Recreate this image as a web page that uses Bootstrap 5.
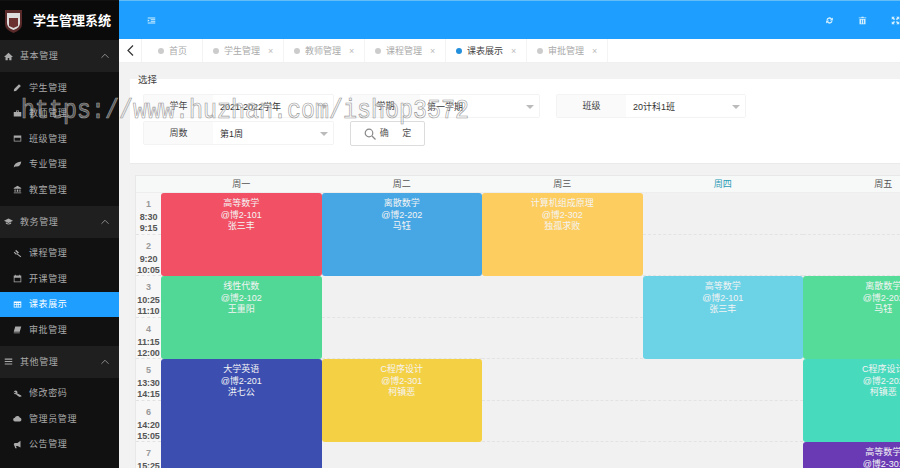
<!DOCTYPE html>
<html lang="zh"><head><meta charset="utf-8"><title>学生管理系统</title>
<link href="https://cdn.jsdelivr.net/npm/bootstrap@5.3.0/dist/css/bootstrap.min.css" rel="stylesheet">
<style>
html,body{height:100%;overflow:hidden}
body{width:900px;height:468px;background:#f2f2f2;font:9px/12px "Liberation Sans","Noto Sans CJK SC",sans-serif;color:#444;position:relative}
.shell{height:468px}
.side{width:119px;flex:none;background:#111;color:#aaa;padding-top:1px}
.brand{height:39px;background:#0a0a0a;color:#fff;font-size:13px;font-weight:700;padding-left:5px;gap:11px}
.sgroup{height:32px;background:#1f1f1f;padding:0 10px 0 4px;letter-spacing:.6px;margin-bottom:0}
.sgroup svg.ic{margin-right:7px}
.sitem{height:25.5px;padding-left:13px;gap:7px;letter-spacing:.6px}
.sitem.on{background:#1e9fff;color:#fff}
.slist{padding:3px 0}
.ic{width:9px;height:9px;fill:currentColor;flex:none}
.chev{width:8px;height:6px;fill:none;stroke:#999;stroke-width:1;margin-left:auto}
.mainc{flex:1;min-width:0;overflow:hidden}
.topb{height:39px;background:#1e9fff;border-top:1px solid #65bdf7;color:#d3efff;padding:0 0 0 28px}
.topb .ric{gap:0;margin:0 -12px 0 auto}
.topb .ric span{width:33px;text-align:center}
.tabsb{height:24px;background:#fff;color:#aaa;border-bottom:1px solid #f0f0f0}
.tbk{width:23px;border-right:1px solid #f2f2f2;color:#333;justify-content:center}
.tabi{width:81px;border-right:1px solid #f4f4f4;padding-left:10px;gap:5px;white-space:nowrap}
.tabi.first{width:61px;padding-left:16px}
.tabi.on{color:#444}
.dot{width:6px;height:6px;border-radius:50%;background:#ccc;flex:none}
.tabi.on .dot{background:#2490dd}
.xx{font-size:9px;color:#bbb;margin-left:3px}
.pane{padding:16px 0 0 11px;width:781px}
.fcard{background:#fff;height:85px;position:relative;padding:15px 0 0 13px;border-bottom:1px solid #eaeaea}
.legendx{position:absolute;left:8px;top:-5px;color:#444;line-height:12px;font-size:9.5px}
.frow{gap:16px;margin-bottom:3px}
.input-group.fgrp{width:191px;flex-wrap:nowrap;height:24px;border:1px solid #f3f3f3;border-radius:2px}
.fgrp.g2{width:190px}
.input-group-text.flab{width:70px;justify-content:center;background:#fafafa;border:0;border-right:1px solid #f0f0f0;border-radius:0;font-size:9px;color:#444;padding:1px 0 0}
.fsel{flex:1;padding:1px 0 0 7px;color:#333;background:#fff;position:relative;display:flex;align-items:center}
.fsel:after{content:"";position:absolute;right:5px;top:10px;border:4.500px solid transparent;border-top-color:#bbb;border-bottom:0}
.btnok.btn{width:75px;height:25px;padding:0;border:1px solid #dcdcdc;border-radius:2px;color:#555;font-size:9px;background:#fff;display:flex;align-items:center;justify-content:center;gap:4px;margin-top:0}
.btnok svg{width:12px;height:12px;fill:none;stroke:#888;stroke-width:1.2}
.tgrid{display:grid;grid-template-columns:25px repeat(5,160.5px);grid-template-rows:17px repeat(8,41.5px);margin:11px 0 0 5px;border-top:1px solid #e8e8e8;border-left:1px solid #e8e8e8;width:900px;height:400px;overflow:hidden;background:#f1f1f1}
.thd{background:#f7f8f8;display:flex;align-items:center;justify-content:center;color:#555;border-bottom:1px solid #eee}
.thd.today{color:#2a9bb5}
.tme{background:#f7f7f7;border-bottom:1px dashed #e2e2e2;text-align:center;font-size:9px;line-height:11px;font-weight:700;color:#555;padding-top:6px;letter-spacing:-.1px}
.tme b{display:block;color:#999;height:13px}
.emp{border-bottom:1px dashed #e3e3e3}
.cls{color:#f4f4f4;text-align:center;border-radius:3px;padding-top:5px;line-height:11.5px;z-index:1}
.mark1{position:absolute;left:21px;top:96px;font:23.330px/30px "Liberation Mono",monospace;color:rgba(255,255,255,.3);-webkit-text-stroke:.6px #9a9a9a;white-space:nowrap;z-index:5;pointer-events:none;transform:scaleY(1.15);transform-origin:left center}
</style></head><body>
<div class="d-flex shell">
<aside class="side">
 <div class="brand d-flex align-items-center">
  <svg width="17" height="24" viewBox="0 0 17 24"><path d="M0 1h17v14q0 6-8.500 9Q0 21 0 15z" fill="#5a2a2a"/><path d="M2 4h13v10q0 5-6.500 7Q2 19 2 14z" fill="#ddd"/><path d="M4 9h9v8l-4.500 2-4.500-2z" fill="#6b3030"/></svg>
  <span>学生管理系统</span></div>
 <div class="sgroup d-flex align-items-center"><svg class="ic" viewBox="0 0 12 12"><path d="M6 1 0 6.500h2V11h3V8h2v3h3V6.500h2z"/></svg>基本管理<svg class="chev" viewBox="0 0 9 6"><path d="M.5 5 4.500 1l4 4"/></svg></div>
 <div class="slist">
  <div class="sitem d-flex align-items-center"><svg class="ic" viewBox="0 0 12 12"><path d="M1 11l.6-3L8 1.500 10.500 4 4 10.500z"/></svg>学生管理</div>
  <div class="sitem d-flex align-items-center"><svg class="ic" viewBox="0 0 12 12"><path d="M4 2h4v2h3v6H1V4h3zm1 1v1h2V3z"/></svg>教师管理</div>
  <div class="sitem d-flex align-items-center"><svg class="ic" viewBox="0 0 12 12"><path d="M1 2h10v8H1zm1 3v4h8V5z"/></svg>班级管理</div>
  <div class="sitem d-flex align-items-center"><svg class="ic" viewBox="0 0 12 12"><path d="M1 10Q1 3 11 2 10 10 3 8.500z"/></svg>专业管理</div>
  <div class="sitem d-flex align-items-center"><svg class="ic" viewBox="0 0 12 12"><path d="M6 1l5 3v1H1V4zM2 6h1.500v3H2zm3 0h2v3H5zm3.500 0H10v3H8.500zM1 10h10v1H1z"/></svg>教室管理</div>
 </div>
 <div class="sgroup d-flex align-items-center"><svg class="ic" viewBox="0 0 12 12"><path d="M6 2 0 5l6 3 6-3zM2.500 7v2q3.500 2 7 0V7L6 9z"/></svg>教务管理<svg class="chev" viewBox="0 0 9 6"><path d="M.5 5 4.500 1l4 4"/></svg></div>
 <div class="slist">
  <div class="sitem d-flex align-items-center"><svg class="ic" viewBox="0 0 12 12"><path d="M4 1l4 3.500-1.500 1.500L3 2.500zM5.500 5.500 11 10l-1 1-5.500-4.500zM1 4.500 2.200 3.500 5 6.500 4 7.500z"/></svg>课程管理</div>
  <div class="sitem d-flex align-items-center"><svg class="ic" viewBox="0 0 12 12"><path d="M3 1h1v1h4V1h1v1h2v9H1V2h2zM2 5v5h8V5z"/></svg>开课管理</div>
  <div class="sitem on d-flex align-items-center"><svg class="ic" viewBox="0 0 12 12"><path d="M1 2h10v8H1zm1 2v1.500h2.500V4zm3.500 0v1.500h1V4zm2 0v1.500H10V4zM2 6.500V9h2.500V6.500zm3.500 0V9h1V6.500zm2 0V9H10V6.500z"/></svg>课表展示</div>
  <div class="sitem d-flex align-items-center"><svg class="ic" viewBox="0 0 12 12"><path d="M3 2h8L9 9H1zM1 10h8v1H1z"/></svg>审批管理</div>
 </div>
 <div class="sgroup d-flex align-items-center"><svg class="ic" viewBox="0 0 12 12"><path d="M1 2h10v1.500H1zm0 3.300h10v1.500H1zm0 3.200h10V10H1z"/></svg>其他管理<svg class="chev" viewBox="0 0 9 6"><path d="M.5 5 4.500 1l4 4"/></svg></div>
 <div class="slist">
  <div class="sitem d-flex align-items-center"><svg class="ic" viewBox="0 0 12 12"><path fill-rule="evenodd" d="M3.500 2a2.500 2.500 0 1 1 0 5 2.500 2.500 0 0 1 0-5zm-.5 2a1 1 0 1 0 0 1.500 1 1 0 0 0 0-1.500zM5.500 5.500l5.500 3v2l-1.500-.5-1 .5-4-3z"/></svg>修改密码</div>
  <div class="sitem d-flex align-items-center"><svg class="ic" viewBox="0 0 12 12"><path d="M3 10a2.500 2.500 0 0 1-.5-5A3.500 3.500 0 0 1 9 4.500 2.800 2.800 0 0 1 9 10z"/></svg>管理员管理</div>
  <div class="sitem d-flex align-items-center"><svg class="ic" viewBox="0 0 12 12"><path d="M10 1v9L6 8H4l1 3H3L2 8Q0 6 2 4h4z"/></svg>公告管理</div>
 </div>
</aside>
<main class="mainc">
 <div class="topb d-flex align-items-center">
  <svg class="ic" viewBox="0 0 12 12"><path d="M1 2h10v1.300H1zm4 2.300h6v1.300H5zm0 2.200h6v1.300H5zM1 8.800h10V10H1zM1 4.500l2.500 1.500L1 7.500z"/></svg>
  <div class="ric d-flex">
   <span><svg class="ic" viewBox="0 0 12 12"><path d="M2 5a4 4 0 0 1 7-1.800L10.500 2v4h-4l1.300-1.300A2.500 2.500 0 0 0 3.500 5.500zM10 7a4 4 0 0 1-7 1.800L1.500 10V6h4L4.200 7.300A2.500 2.500 0 0 0 8.500 6.500z"/></svg></span>
   <span><svg class="ic" viewBox="0 0 12 12"><path d="M4.500 1h3v1H11v1H1V2h3.500zM2 4h8v7H2zm2 1v5h1V5zm3 0v5h1V5z"/></svg></span>
   <span><svg class="ic" viewBox="0 0 12 12"><path d="M1 1h4L3.700 2.300 5.500 4 4 5.500 2.300 3.700 1 5zm10 0v4L9.700 3.700 8 5.500 6.500 4l1.800-1.700L7 1zM1 11V7l1.300 1.300L4 6.500 5.500 8 3.700 9.700 5 11zm10 0H7l1.300-1.300L6.500 8 8 6.500l1.700 1.800L11 7z"/></svg></span>
  </div>
 </div>
 <div class="tabsb d-flex">
  <div class="tbk d-flex align-items-center"><svg width="7" height="11" viewBox="0 0 7 11" fill="none" stroke="#333" stroke-width="1.200"><path d="M6 .5 1 5.500l5 5"/></svg></div>
  <div class="tabi first d-flex align-items-center"><i class="dot"></i>首页</div>
  <div class="tabi d-flex align-items-center"><i class="dot"></i>学生管理<span class="xx">×</span></div>
  <div class="tabi d-flex align-items-center"><i class="dot"></i>教师管理<span class="xx">×</span></div>
  <div class="tabi d-flex align-items-center"><i class="dot"></i>课程管理<span class="xx">×</span></div>
  <div class="tabi on d-flex align-items-center"><i class="dot"></i>课表展示<span class="xx">×</span></div>
  <div class="tabi d-flex align-items-center"><i class="dot"></i>审批管理<span class="xx">×</span></div>
 </div>
 <div class="pane">
  <div class="fcard">
   <span class="legendx">选择</span>
   <div class="frow d-flex">
    <div class="input-group fgrp"><span class="input-group-text flab">学年</span><div class="fsel">2021-2022学年</div></div>
    <div class="input-group fgrp g2"><span class="input-group-text flab">学期</span><div class="fsel">第一学期</div></div>
    <div class="input-group fgrp g2"><span class="input-group-text flab">班级</span><div class="fsel">20计科1班</div></div>
   </div>
   <div class="frow d-flex">
    <div class="input-group fgrp"><span class="input-group-text flab">周数</span><div class="fsel">第1周</div></div>
    <button class="btn btnok"><svg viewBox="0 0 12 12"><circle cx="5" cy="5" r="3.800"/><path d="M8 8l3.500 3.500"/></svg>确&emsp;&ensp;定</button>
   </div>
  </div>
  <div class="tgrid">
   <div class="thd"></div><div class="thd">周一</div><div class="thd">周二</div><div class="thd">周三</div><div class="thd today">周四</div><div class="thd">周五</div>

   <div class="tme"><b>1</b>8:30<br>9:15</div>
   <div class="cls" style="grid-row:span 2;background:#f25064">高等数学<br>@博2-101<br>张三丰</div>
   <div class="cls" style="grid-row:span 2;background:#47a7e4">离散数学<br>@博2-202<br>马钰</div>
   <div class="cls" style="grid-row:span 2;background:#fdcd60">计算机组成原理<br>@博2-302<br>独孤求败</div>
   <div class="emp"></div><div class="emp"></div>

   <div class="tme"><b>2</b>9:20<br>10:05</div>
   <div class="emp"></div><div class="emp"></div>

   <div class="tme"><b>3</b>10:25<br>11:10</div>
   <div class="cls" style="grid-row:span 2;background:#52d896">线性代数<br>@博2-102<br>王重阳</div>
   <div class="emp"></div><div class="emp"></div>
   <div class="cls" style="grid-row:span 2;background:#6cd2e6">高等数学<br>@博2-101<br>张三丰</div>
   <div class="cls" style="grid-row:span 2;background:#55dc98">离散数学<br>@博2-202<br>马钰</div>

   <div class="tme"><b>4</b>11:15<br>12:00</div>
   <div class="emp"></div><div class="emp"></div>

   <div class="tme"><b>5</b>13:30<br>14:15</div>
   <div class="cls" style="grid-row:span 4;background:#3c4fb1">大学英语<br>@博2-201<br>洪七公</div>
   <div class="cls" style="grid-row:span 2;background:#f4d044">C程序设计<br>@博2-301<br>柯镇恶</div>
   <div class="emp"></div><div class="emp"></div>
   <div class="cls" style="grid-row:span 2;background:#48dabc">C程序设计<br>@博2-202<br>柯镇恶</div>

   <div class="tme"><b>6</b>14:20<br>15:05</div>
   <div class="emp"></div><div class="emp"></div>

   <div class="tme"><b>7</b>15:25<br>16:10</div>
   <div class="emp"></div><div class="emp"></div><div class="emp"></div>
   <div class="cls" style="grid-row:span 2;background:#6a3ab4">高等数学<br>@博2-301<br>张三丰</div>
  </div>
 </div>
</main>
</div>
<div class="mark1">https://www.huzhan.com/ishop3572</div>
<script src="https://cdn.jsdelivr.net/npm/bootstrap@5.3.0/dist/js/bootstrap.bundle.min.js"></script>
</body></html>
